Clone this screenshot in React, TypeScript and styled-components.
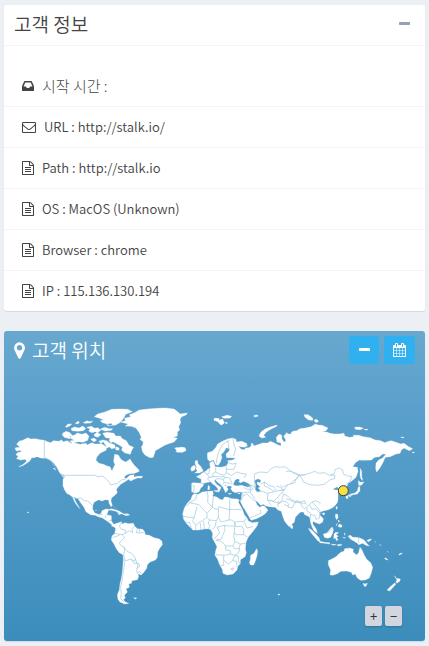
import React from "react";
import styled, { createGlobalStyle } from "styled-components";

const GlobalStyle = createGlobalStyle`
  * { box-sizing: border-box; }
  body {
    margin: 0;
    background: #ecf0f5;
    color: #444;
    font-family: "Noto Sans CJK KR", "Source Sans Pro", sans-serif;
    font-size: 13px;
    font-weight: 350;
    line-height: 20px;
  }
`;

const Page = styled.main`
  display: flex;
  flex-direction: column;
  gap: 20px;
  padding: 5px 4px;
`;

const Card = styled.section<{ $map?: boolean }>`
  border-radius: 3px;
  overflow: hidden;
  color: ${(p) => (p.$map ? "#fff" : "#444")};
  background: ${(p) => (p.$map ? "linear-gradient(#67a8ce, #5ba0cc 25%, #3c8dbc)" : "#fff")};
  box-shadow: 0 1px 1px rgba(0, 0, 0, 0.1);
`;

const CardHeader = styled.header<{ $divided?: boolean }>`
  display: flex;
  align-items: center;
  justify-content: space-between;
  height: ${(p) => (p.$divided ? "41px" : "40px")};
  padding: 0 10px 2px;
  border-bottom: ${(p) => (p.$divided ? "1px solid #f4f4f4" : "none")};
`;

const Title = styled.h3`
  display: flex;
  align-items: center;
  gap: 7px;
  margin: 0;
  font-size: 19px;
  font-weight: 350;
  line-height: 24px;
`;

const Tools = styled.div`
  display: flex;
  gap: 5px;
`;

const PlainButton = styled.button`
  display: flex;
  padding: 5px;
  border: 0;
  background: transparent;
  color: #97a0b3;
`;

const BlueButton = styled.button`
  display: flex;
  align-items: center;
  justify-content: center;
  min-width: 30px;
  height: 28px;
  padding: 0 9px;
  border: 0;
  border-radius: 3px;
  background: #31b0ef;
  color: #fff;
`;

const InfoList = styled.ul`
  margin: 0;
  padding: 20px 0 0;
  list-style: none;
`;

const InfoRow = styled.li`
  display: flex;
  align-items: center;
  gap: 8px;
  padding: 10px 18px;
  border-bottom: 1px solid #f4f4f4;
  &:last-child { border-bottom: 0; }
`;

const InfoText = styled.span<{ $korean?: boolean }>`
  font-size: ${(p) => (p.$korean ? "15px" : "13px")};
  font-weight: ${(p) => (p.$korean ? 300 : 350)};
`;

const Glyph = styled.svg`
  display: block;
  flex: none;
  fill: currentColor;
`;

const MapArea = styled.div`
  position: relative;
`;

const MapSvg = styled.svg`
  display: block;
  width: 100%;
  height: auto;
`;

const Land = styled.g`
  fill: #fff;
  fill-rule: evenodd;
  stroke: #fff;
  stroke-width: 1;
  stroke-linejoin: round;
`;

const Borders = styled.g`
  fill: none;
  stroke: #98c5e0;
  stroke-width: 2;
  stroke-linejoin: round;
`;

const ZoomControls = styled.div`
  position: absolute;
  right: 23px;
  bottom: 15px;
  display: flex;
  gap: 3px;
`;

const ZoomButton = styled.button`
  width: 17px;
  height: 20px;
  padding: 0;
  border: 0;
  border-radius: 2px;
  background: #d2d6de;
  color: #333;
  font: 13px/20px "Noto Sans CJK KR", sans-serif;
  box-shadow: 0 1px 2px rgba(0, 0, 0, 0.2);
`;

type IconName = "file" | "envelope" | "inbox" | "minus" | "marker" | "calendar";

const icons: Record<IconName, { x: number; w: number; d: string }> = {
  file: {
    x: 128, w: 1536,
    d: "M1596 380q28 28 48 76t20 88v1152q0 40-28 68t-68 28h-1344q-40 0-68-28t-28-68v-1600q0-40 28-68t68-28h896q40 0 88 20t76 48zm-444-244v376h376q-10-29-22-41l-313-313q-12-12-41-22zm384 1528v-1024h-416q-40 0-68-28t-28-68v-416h-768v1536h1280zm-1024-864q0-14 9-23t23-9h704q14 0 23 9t9 23v64q0 14-9 23t-23 9h-704q-14 0-23-9t-9-23v-64zm736 224q14 0 23 9t9 23v64q0 14-9 23t-23 9h-704q-14 0-23-9t-9-23v-64q0-14 9-23t23-9h704zm0 256q14 0 23 9t9 23v64q0 14-9 23t-23 9h-704q-14 0-23-9t-9-23v-64q0-14 9-23t23-9h704z",
  },
  envelope: {
    x: 0, w: 1792,
    d: "M1664 1504v-768q-32 36-69 66-268 206-426 338-51 43-83 67t-86.5 48.5-102.5 24.5h-2q-48 0-102.5-24.5t-86.5-48.5-83-67q-158-132-426-338-37-30-69-66v768q0 13 9.5 22.5t22.5 9.5h1472q13 0 22.5-9.5t9.5-22.5zm0-1051v-24.5l-.5-13-3-12.5-5.5-9-9-7.5-14-2.5h-1472q-13 0-22.5 9.5t-9.5 22.5q0 168 147 284 193 152 401 317 6 5 35 29.5t46 37.5 44.5 31.5 50.5 27.5 43 9h2q20 0 43-9t50.5-27.5 44.5-31.5 46-37.5 35-29.5q208-165 401-317 54-43 100.5-115.5t46.5-131.5zm128-37v1088q0 66-47 113t-113 47h-1472q-66 0-113-47t-47-113v-1088q0-66 47-113t113-47h1472q66 0 113 47t47 113z",
  },
  inbox: {
    x: 128, w: 1536,
    d: "M1151 960h316q-1-3-2.5-8t-2.5-8l-212-496h-708l-212 496q-1 2-2.5 8t-2.5 8h316l95 192h320zm513 30v482q0 26-19 45t-45 19h-1408q-26 0-45-19t-19-45v-482q0-62 25-123l238-552q10-25 36.5-42t52.5-17h832q26 0 52.5 17t36.5 42l238 552q25 61 25 123z",
  },
  minus: {
    x: 192, w: 1408,
    d: "M1600 736v192q0 40-28 68t-68 28h-1216q-40 0-68-28t-28-68v-192q0-40 28-68t68-28h1216q40 0 68 28t28 68z",
  },
  marker: {
    x: 384, w: 1024,
    d: "M1152 640q0-106-75-181t-181-75-181 75-75 181 75 181 181 75 181-75 75-181zm256 0q0 109-33 179l-364 774q-16 33-47.5 52t-67.5 19-67.5-19-46.5-52l-365-774q-33-70-33-179 0-212 150-362t362-150 362 150 150 362z",
  },
  calendar: {
    x: 64, w: 1664,
    d: "M192 1664h288v-288h-288v288zm352 0h320v-288h-320v288zm-352-352h288v-320h-288v320zm352 0h320v-320h-320v320zm-352-384h288v-288h-288v288zm736 736h320v-288h-320v288zm-384-736h320v-288h-320v288zm768 736h288v-288h-288v288zm-384-352h320v-320h-320v320zm-352-864v-288q0-13-9.5-22.5t-22.5-9.5h-64q-13 0-22.5 9.5t-9.5 22.5v288q0 13 9.5 22.5t22.5 9.5h64q13 0 22.5-9.5t9.5-22.5zm736 864h288v-320h-288v320zm-384-384h320v-288h-320v288zm384 0h288v-288h-288v288zm32-480v-288q0-13-9.5-22.5t-22.5-9.5h-64q-13 0-22.5 9.5t-9.5 22.5v288q0 13 9.5 22.5t22.5 9.5h64q13 0 22.5-9.5t9.5-22.5zm384-64v1280q0 52-38 90t-90 38h-1408q-52 0-90-38t-38-90v-1280q0-52 38-90t90-38h128v-96q0-66 47-113t113-47h64q66 0 113 47t47 113v96h384v-96q0-66 47-113t113-47h64q66 0 113 47t47 113v96h128q52 0 90 38t38 90z",
  },
};

function Icon({ name, size = 14 }: { name: IconName; size?: number }) {
  const { x, w, d } = icons[name];
  return (
    <Glyph width={Math.round((size * w) / 1792)} height={size} viewBox={`${x} 0 ${w} 1792`} aria-hidden="true">
      <path d={d} />
    </Glyph>
  );
}

const rows: { icon: IconName; text: string; korean?: boolean }[] = [
  { icon: "inbox", text: "시작 시간 :", korean: true },
  { icon: "envelope", text: "URL : http://stalk.io/" },
  { icon: "file", text: "Path : http://stalk.io" },
  { icon: "file", text: "OS : MacOS (Unknown)" },
  { icon: "file", text: "Browser : chrome" },
  { icon: "file", text: "IP : 115.136.130.194" },
];

// Each region keeps its own origin on the map canvas.
const regions: { name: string; x: number; y: number; land: string; borders: string }[] = [
  {
    name: "North America", x: -12, y: 87,
    land:
      "M45 147L47 143 60 142 50 133 57 124 68 121 84 113 92 117 105 116 120 119 133 121 142 125 152 128 160 122 178 124 183 119 190 125 202 122 213 130 222 128 240 133 258 130 262 135 275 128 285 132 300 132 310 125 318 138 319 150 300 160 290 172 288 181 297 190 310 193 321 198 330 200 336 214 340 203 345 194 341 184 344 163 355 165 362 177 370 183 378 186 390 177 396 187 403 196 415 208 418 214 404 220 390 221 380 224 372 232 378 236 390 226 402 224 402 232 412 229 428 229 425 234 412 234 402 238 392 243 386 238 372 247 362 253 354 262 349 268 352 278 342 288 334 294 333 304 337 316 333 320 327 309 326 300 316 299 306 303 296 299 282 307 278 318 278 328 285 340 296 343 303 341 306 332 318 327 326 328 323 338 320 344 334 347 334 362 340 372 350 377 362 374 365 380 354 379 340 379 330 370 320 362 306 353 294 350 286 346 272 344 258 335 252 322 242 308 234 296 222 292 226 303 233 315 240 326 232 318 224 306 218 292 210 285 200 280 194 270 189 257 189 240 192 230 182 222 176 213 170 200 160 188 150 180 138 175 122 174 112 170 98 174 97 170 90 182 80 190 68 197 56 200 68 194 80 184 76 178 62 180 50 176 55 168 48 165 52 158 65 155 60 151 50 153Z" +
      "M160 205l4 0 3 5-4-2zM182 220l9 5 5 9-9-5zM82 336l5 1-3 2z" +
      "M188 100l10-6 12 4 6 8-8 10-15-4-6-6zM210 108l14-3 8-6 14 4 12-4 9 10-4 12-14 6-14-2-18 4-8-6 14-2-12-6zM196 80l8-8 11 0-6 6-9 4zM213 86l10-5 14 3 12-6 8 8-7 6-16 2-18-2zM226 70l9-7 3 6-8 3zM250 68l12-6 6 3 10-2-6 6-18 1zM260 82l14-3 10 6 10-2 8 8-10 8-6-4-10 3-10-5 4-6zM283 102l10-4 10 6-10 8-10-4zM272 118l10-4 8 6-8 6zM320 72l15-2 3 6-14 2z" +
      "M283 50l10-8 22-6 20-8 26-1 22 1 14 7-20 8-6 12-10 12-14 8-20 2-8-6-12-3-6-6 10-2-14-6z" +
      "M300 88l14-6 14 4 10 0-4 5-18 2zM308 100l14-3 20 3 5 8 14 0 6 8 12 6 8 14 14 6-6 9-4 12-16-4-10-8 2-10-14-8-14-8-6 4-6-8 4-6-14-2zM296 124l12-4 12 2 10 8 14 4 2 10-12 2-6-6-8 5-6-8-10-6zM348 140l10 4-2 7-9-2z",
    borders:
      "M133 121V172L142 176 155 185 163 198 176 210M192 226H286L292 230 306 228 318 236 328 247 332 255 352 250 364 240 376 238M217 291L230 296 242 294 254 302 266 304 278 317M294 349L300 342 308 344M318 345L315 354M326 363L336 360",
  },
  {
    name: "Greenland and Caribbean", x: 288, y: 87,
    land:
      "M62 66L76 62 74 55 92 50 88 44 104 38 118 30 144 27 172 25 196 24 222 27 234 36 240 42 262 39 258 45 245 50 240 58 242 68 236 80 239 90 232 96 232 108 220 112 232 115 222 126 206 131 194 136 180 144 166 152 160 172 150 173 136 166 128 156 124 140 128 136 130 126 120 118 124 112 118 98 108 84 94 79 76 78 84 72z" +
      "M224 145l7-3 3 4 13-4 8 1 2 9-10 5-15 0-5-3 5-2z" +
      "M23 330l12-4 22 7 14 9-11 0-12-8-13-3zM68 342l15-1 6 4-12 2zM53 341l8 1-3 2zM40 319l4 3M47 324l4 4",
    borders: "M78 341V346",
  },
  {
    name: "South America", x: 258, y: 387,
    land:
      "M64 78L74 72 86 68 95 65 96 73 104 68 116 71 130 70 134 79 142 86 158 88 164 95 166 104 178 106 192 113 208 117 216 124 217 134 208 146 203 156 202 172 196 180 180 186 172 194 170 205 162 216 154 225 144 221 146 230 142 239 126 242 124 250 116 252 118 262 108 266 112 276 103 286 106 294 100 299 106 306 116 310 104 312 90 306 84 298 82 284 88 270 90 252 94 236 97 216 99 194 100 176 99 164 88 158 80 148 72 132 64 120 66 108 74 101 77 86 72 80Z" +
      "M131 293l9 1-4 3zM16 31l4 0z",
    borders:
      "M95 66L88 78 94 88 106 90 106 100 96 104 74 100M67 112L78 110 90 104M106 100L118 92 128 98 126 86 132 80M142 88L138 98 148 99 156 97 164 99M148 87V98M96 104L104 112 94 122 88 130 94 138 102 141 104 150 101 164 103 176 108 182 122 177 134 184 136 176 132 168 124 160 112 154 102 141M101 178L104 190 100 214 97 236 92 262 94 280 92 296 102 306M122 177L132 190 146 190 150 198 140 206 144 198 136 176M140 206L142 220 150 215 156 222M107 182L104 182",
  },
  {
    name: "Africa", x: 513, y: 87,
    land:
      "M58 281L70 283 82 276 100 274 113 273 115 282 112 288 125 291 135 298 143 300 149 291 158 292 170 296 187 297 193 300 190 307 202 328 208 344 216 354 220 363 232 368 250 366 246 378 234 394 220 411 213 426 211 448 214 458 210 470 196 479 196 490 188 500 186 510 174 522 156 525 144 520 142 508 134 494 128 478 120 466 122 452 126 440 120 428 112 414 113 400 108 390 100 386 88 387 70 390 54 390 44 380 34 370 26 358 23 342 28 324 38 308 48 298 52 286Z" +
      "M245 446l-8 14-10 6-1 14-3 8 4 7 9 0 5-12 5-16 2-14z",
    borders:
      "M66 282L62 298 44 308 36 318M42 308L72 314 96 340 112 322 98 306 99 286 96 275M115 288L112 322 120 326 130 328 132 320 164 330V296M164 330V328L200 329M24 348L40 352 58 352 66 320M58 352L52 362 62 376 72 368 82 362 96 352 96 340M130 328L130 352 124 362 104 360 96 352M30 366L44 368 50 388M62 376V390M76 370L78 389M86 364L88 387M100 386L104 380 100 366 104 360M124 362L120 380 112 388M130 352L138 366 162 360 164 330M126 382L148 376 160 378 170 378 180 378 178 366 172 360 162 360M178 366L206 364 214 356M200 378L184 380 178 366M206 364L216 384 234 380M200 378L206 388 206 404 218 412M126 382L134 398 124 410 118 416M148 376L150 390 138 418 122 420M180 378L178 396 182 404 206 404M178 396L176 410 180 424 196 432 212 430M122 420L136 424 146 430 152 438 174 438 180 424M122 464L150 466 166 462 166 452 152 450 152 438M174 438L178 446 192 446 196 432M166 462L180 466 192 456 194 444M146 466L146 496 136 498M146 480L160 492 172 482 180 466 190 468 190 486 196 490M172 482L184 484 186 500M168 506L176 504 172 512z",
  },
  {
    name: "Europe and West Asia", x: 513, y: 87,
    land:
      "M97 165L98 158 112 154 122 143 128 132 142 124 158 117 174 114 184 119 183 126 200 124 214 130 217 138 208 142 196 140 190 137 198 148 208 149 212 144 222 143 229 137 229 130 234 131 236 138 252 133 262 129 278 129 286 124 298 129 308 134 318 138 318 129 306 126 304 112 312 103 320 105 321 118 328 127 333 121 326 108 334 101 348 104 350 98 366 98 371 91 390 84 405 82V330H386L374 338 361 352 358 366 348 376 342 380 334 368 328 350 322 332 312 328 304 320 288 318 272 318 266 313 257 316 248 306 240 300 246 314 254 322 262 318 268 318 279 330 272 340 262 347 244 356 228 361 222 350 214 336 204 320 196 304 199 296 201 276 192 275 182 278 172 274 167 265 172 261 166 258 160 258 155 262 160 268 152 278 148 270 144 262 136 253 126 245 120 238 118 244 126 254 138 262 136 268 132 276 124 273 130 268 122 258 112 251 108 245 98 247 86 250 84 258 77 264 72 276 60 279 50 275 50 250 54 248 78 250 79 238 64 230 76 224 80 220 92 214 98 208 106 204 104 188 114 184 118 192 120 200 138 202 154 198 160 188 158 182 174 180 182 174 170 173 155 173 153 162 162 154 164 146 154 143 146 156 138 164 141 172 136 186 130 196 122 194 116 180 104 184 98 178Z" +
      "M174 254L180 240 188 236 196 240 191 244 196 248 206 244 220 250 230 258 218 262 200 256 184 258Z" +
      "M238 242L248 236 258 240 256 248 247 246 246 252 256 260 250 264 258 274 246 276 240 268 242 256Z" +
      "M60 184l7-3 2 10 8 8 8 14-12 6-14 0 8-6-4-6 2-6-4-8zM50 200l8-4 4 5-3 9-9 4-3-6zM4 146l8-4 18 2 3 7-12 5-15-2z" +
      "M117 55l14 0 2 5 10-3 5 12-8 6-5-2-6-8-12-4zM140 50l16-4 14 3-5 5-18 1zM150 67l8 1-4 4zM236 47l10-2 4 3-11 3z" +
      "M252 108l6-12 12-9 16-6 20-6-1 4-17 8-14 9-8 10 6 6-12 2z" +
      "M100 256l4 4-1 10-5-2zM116 272l14-1-3 5zM160 280l10 1-8 2zM188 280l8-2-3 4zM346 374l6 4 0 8-5-2z",
    borders:
      "M124 190L126 174 132 154 142 134 154 126 164 122M174 114L176 130 182 148 176 168M158 122L162 146M86 216L96 222 102 230 98 238 106 244M104 206L102 220 96 222M122 202L122 216 112 222 116 230 102 232M122 216L134 222 148 226 154 218 154 200M160 188L172 192 184 190 176 208 154 208M154 218L170 226 186 216 198 220 214 222 208 234M112 230L130 230 144 230 152 232 144 238 132 236 122 238M152 232L164 234 172 250M144 238L148 248 142 254M148 248L170 250M148 256L158 258M52 256L58 258 56 276M78 249L88 252M206 262L216 268 226 268 226 258M226 268L226 276 202 278M216 256L232 256 240 262M230 260L234 268 226 272M226 276L240 298M202 278L204 288 216 282M204 288L198 302M216 282L240 304M224 354L238 348 258 340 256 330M246 276L262 274 278 280 278 300 288 316M278 280L294 276 310 272 330 268M278 300L296 304 310 290 318 280 326 276M310 320L308 312 320 302 326 282 338 288 350 300 372 308 390 310M240 264L238 222 256 216 278 218 286 208 300 200 316 202 330 200 344 210 356 220 374 226M374 226L362 238 360 248 338 254 322 262 316 256M258 252L270 246 280 256 296 260 304 272M268 246L268 258 278 262 298 274M304 258L316 262 328 272 314 272M374 226L390 224M338 254L330 268",
  },
  {
    name: "East Asia and Siberia", x: 858, y: 117,
    land:
      "M-12 68L0 74 8 64 20 62 30 56 50 55 66 49 76 42 84 45 96 46 106 50 114 54 108 62 96 66 110 66 120 70 132 72 148 72 162 70 164 78 178 82 190 81 190 76 206 76 220 80 240 83 256 90 272 92 284 98 296 94 304 92 322 98 332 102 342 100 356 110 368 116 358 122 342 114 334 120 330 130 318 132 300 140 286 142 282 150 278 160 268 176 260 186 257 176 258 160 266 150 278 144 288 132 278 132 268 140 254 142 244 150 222 151 208 150 196 158 188 170 202 172 204 184 198 202 184 214 174 220 170 230 174 244 168 254 160 248 156 236 146 238 142 230 128 238 140 242 136 250 142 266 142 278 130 292 118 298 104 300 90 306H-12Z" +
      "M42 14l12 0 14 10 0 7-12-1-11-8zM72 30l8-2 6 6-8 4zM194 52l14-1 12 4-10 4-14-1zM222 58l12 0-4 3zM332 82l10-1-2 3zM366 126l8 1-4 2z" +
      "M210 175l5 8 0 16 3 12-5-4-3-12 1-12zM205 212l7 5 10-1-8 10-8 0zM209 228l1 14-8 10-14 2-8 6-7-3 10-5 12-3 8-8 1-8zM168 258l6 1-1 8-5-3zM178 256l8-1-3 4zM138 290l4 0-1 8-3-2zM97 310l6-2 1 5-4 2z",
    borders:
      "M-12 184L0 184 20 190 30 196 46 194 64 188 74 184 86 190 104 188 118 196 132 192 136 178 148 174 158 180 160 192 174 198 186 200 180 214 170 222M26 194L36 206 40 216 60 224 84 226 106 222 118 210 134 206 134 196 122 196M0 224L10 212 22 206 26 194M-12 266L0 270 14 278 30 276 44 272 48 284M148 238L162 230 170 222M160 244L172 243",
  },
  {
    name: "South Asia and Oceania", x: 798, y: 387,
    land:
      "M-10 18L0 20 16 22 24 30 34 34 38 48 44 64 54 76 60 66 65 52 76 42 84 34 94 30 100 34 104 44 114 48 120 54 122 68 126 80 132 92 142 100 140 90 134 80 128 72 129 64 138 68 148 72 158 66 160 56 150 46 148 36 160 32 172 30 184 22 196 14 204 0V-30H-10Z" +
      "M63 74l5 3-1 7-4-2zM115 85l9 4 14 14 9 10 4 12-7-2-12-14-10-12zM149 124l14 3 15 1 2 4-16-2-15-2zM183 133l8 0 8 1-8 2zM202 134l10-1 4 2-12 3zM160 102l10-2 10-12 6-7 4 6-2 12-6 13-9 3-10-3zM192 102l3-4 10-1-2 4-6 2 8 6-5 2 4 9-4 2-5-9-4 3z" +
      "M197 42l6 1 1 10-4 6-4-8zM204 60l5 3-3 4zM208 72l7 3 1 6-6 1-6-3zM198 76l4-6-3 7zM223 99l3 2-2 5zM218 112l5 1 4-1-3 3z" +
      "M234 108l8-2 6 6 8 0 14 2 12 6 8 10 8 8-10-2-10-6-12 4-6-6-10-6-8-4zM290 122l10-5 5 1-9 7zM314 124l4 3zM328 134l6 3zM346 173l8 6-3 1-7-4zM386 163l8-4 3 1-8 5zM352 153l2 4z" +
      "M175 182L184 178 198 170 206 162 214 156 222 154 224 146 234 145 238 150 236 143 250 148 249 156 260 165 266 158 270 142 276 150 282 164 290 178 302 188 308 202 304 218 298 234 286 240 272 241 262 234 256 222 248 225 244 217 230 213 212 214 202 221 188 226 180 224 182 210 175 194Z" +
      "M279 250l6 2 7-2-4 9-5 0zM373 227l6 8 12 2-2 7-9 6-2-6 3-4zM374 249l4 3-8 9-11 12-8-3 10-10zM24 282l6 1-4 3z",
    borders:
      "M0 0L14 6 28 10 38 4 48 4 56 12 54 22 66 24 74 10 82 0M28 10L24 2M42 14L54 18M82 0L92 8 96 20 104 26 110 22 118 14 126 6 138 2 152 10M110 22L112 34 122 40 120 58M118 14L126 28 138 26 150 40 148 54 138 58 134 46 122 44M126 6L136 16 148 30 156 44M166 99L176 96 188 86M266 110V130",
  },
];

function WorldMap() {
  return (
    <MapSvg viewBox="0 0 1263 810" role="img" aria-label="고객 위치">
      {regions.map((r) => (
        <Land key={r.name} transform={`translate(${r.x} ${r.y})`}>
          <path d={r.land} />
        </Land>
      ))}
      {regions.map((r) => (
        <Borders key={r.name} transform={`translate(${r.x} ${r.y})`}>
          <path d={r.borders} />
        </Borders>
      ))}
      <circle cx="1018" cy="359" r="15" fill="#f8e23b" stroke="#383f47" strokeWidth="3" />
    </MapSvg>
  );
}

export default function App() {
  return (
    <>
      <GlobalStyle />
      <Page>
        <Card>
          <CardHeader $divided>
            <Title>고객 정보</Title>
            <PlainButton type="button" aria-label="고객 정보 접기">
              <Icon name="minus" />
            </PlainButton>
          </CardHeader>
          <InfoList>
            {rows.map((row) => (
              <InfoRow key={row.text}>
                <Icon name={row.icon} />
                <InfoText $korean={row.korean}>{row.text}</InfoText>
              </InfoRow>
            ))}
          </InfoList>
        </Card>
        <Card $map>
          <CardHeader>
            <Title>
              <Icon name="marker" size={19} />
              고객 위치
            </Title>
            <Tools>
              <BlueButton type="button" aria-label="고객 위치 접기">
                <Icon name="minus" />
              </BlueButton>
              <BlueButton type="button" aria-label="날짜 범위">
                <Icon name="calendar" />
              </BlueButton>
            </Tools>
          </CardHeader>
          <MapArea>
            <WorldMap />
            <ZoomControls>
              <ZoomButton type="button" aria-label="확대">+</ZoomButton>
              <ZoomButton type="button" aria-label="축소">−</ZoomButton>
            </ZoomControls>
          </MapArea>
        </Card>
      </Page>
    </>
  );
}
